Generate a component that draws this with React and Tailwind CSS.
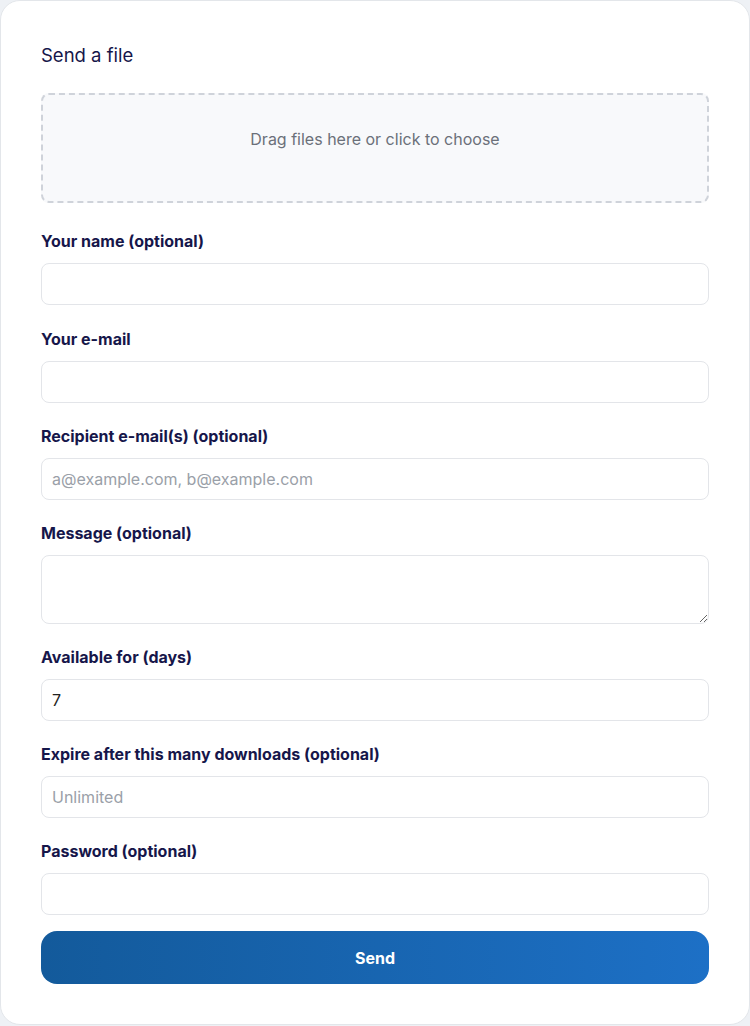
import React from "react";

function Field({ label, children, className = "" }) {
  return (
    <div className={"flex flex-col " + className}>
      <label className="text-[16px] leading-[20px] font-bold text-[#16164a] mb-[12px]">{label}</label>
      {children}
    </div>
  );
}

const inputCls =
  "w-full h-[42px] rounded-[8px] border border-[#e3e5e9] bg-white px-[10px] text-[16px] text-[#222] placeholder:text-[#9aa0a8] outline-none";

export default function App() {
  return (
    <div className="min-h-[1026px] bg-[#eef1f5] font-['Inter',sans-serif]">
      <div className="w-[750px] h-[1025px] bg-white border border-[#e3e6ea] rounded-[20px] px-[40px] pt-[40px]">
        <h1 className="text-[18.5px] leading-[28px] font-normal text-[#16164a]">Send a file</h1>
        <div className="mt-[24px] h-[110px] rounded-[8px] border-2 border-dashed border-[#cfd3da] bg-[#f8f9fb] flex justify-center pt-[32px]">
          <span className="text-[16px] leading-[24px] text-[#6b7079]">Drag files here or click to choose</span>
        </div>
        <div className="mt-[28px] flex flex-col gap-[23px]">
          <Field label="Your name (optional)">
            <input className={inputCls} />
          </Field>
          <Field label="Your e-mail" className="mt-[1px]">
            <input className={inputCls} />
          </Field>
          <Field label="Recipient e-mail(s) (optional)">
            <input className={inputCls} placeholder="a@example.com, b@example.com" />
          </Field>
          <Field label="Message (optional)">
            <textarea className="w-full h-[69px] block rounded-[8px] border border-[#e3e5e9] bg-white px-[10px] py-[8px] text-[16px] outline-none" />
          </Field>
          <Field label="Available for (days)">
            <input className={inputCls} defaultValue="7" />
          </Field>
          <Field label="Expire after this many downloads (optional)">
            <input className={inputCls} placeholder="Unlimited" />
          </Field>
          <Field label="Password (optional)">
            <input className={inputCls} type="password" />
          </Field>
        </div>
        <button className="mt-[16px] w-full h-[53px] rounded-[16px] bg-gradient-to-r from-[#135a9b] to-[#1d70c6] text-white text-[16px] font-bold">
          Send
        </button>
      </div>
    </div>
  );
}
